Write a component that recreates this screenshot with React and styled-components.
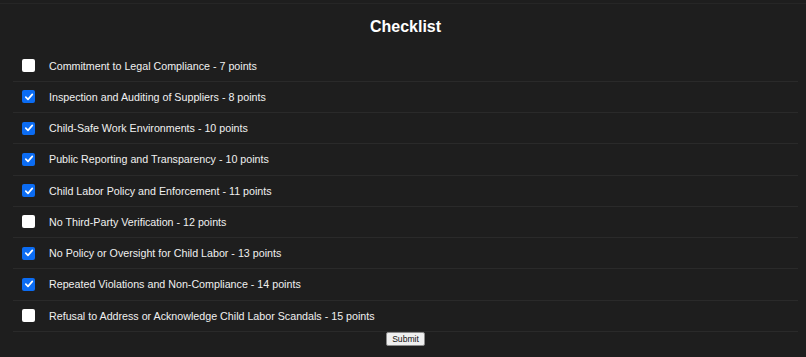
import React, { useState } from "react";
import styled, { createGlobalStyle } from "styled-components";

const GlobalStyle = createGlobalStyle`
    html, body {
        margin: 0;
        padding: 0;
        background: #1e1e1e;
        font-family: "Liberation Sans", Arial, sans-serif;
    }
`;

const Wrapper = styled.div`
    margin-top: 3px;
    border-top: 1px solid #262626;
    padding: 0 8px 0 13px;
    height: 353px;
    box-sizing: border-box;
    background: #1e1e1e;
    color: #ffffff;
`;

const Title = styled.h1`
    margin: 0 0 14.5px;
    padding-top: 14px;
    font-size: 16px;
    line-height: 18px;
    font-weight: bold;
    text-align: center;
    color: #ffffff;
`;

const List = styled.ul`
    list-style: none;
    margin: 0;
    padding: 0;
`;

const Row = styled.li`
    display: flex;
    align-items: center;
    gap: 14px;
    height: 31.25px;
    box-sizing: border-box;
    padding-left: 9px;
    border-bottom: 1px solid #2a2a2a;
    font-size: 10.7px;
    color: #f0f0f0;
    cursor: pointer;
`;

const HiddenInput = styled.input`
    display: none;
`;

const Box = styled.span`
    width: 13px;
    height: 13px;
    flex: none;
    border-radius: 2px;
    display: flex;
    align-items: center;
    justify-content: center;
    background: ${({ checked }) => (checked ? "#0b6cf3" : "#ffffff")};
`;

const Footer = styled.div`
    display: flex;
    justify-content: center;
`;

const SubmitButton = styled.button`
    height: 14px;
    padding: 0 5px;
    margin-top: 0;
    border: 1px solid #8a8a8a;
    border-radius: 2px;
    background: #efefef;
    color: #111111;
    font-family: "Liberation Sans", Arial, sans-serif;
    font-size: 8.6px;
    line-height: 12px;
`;

const items = [
    { label: "Commitment to Legal Compliance", points: 7, checked: false },
    { label: "Inspection and Auditing of Suppliers", points: 8, checked: true },
    { label: "Child-Safe Work Environments", points: 10, checked: true },
    { label: "Public Reporting and Transparency", points: 10, checked: true },
    { label: "Child Labor Policy and Enforcement", points: 11, checked: true },
    { label: "No Third-Party Verification", points: 12, checked: false },
    { label: "No Policy or Oversight for Child Labor", points: 13, checked: true },
    { label: "Repeated Violations and Non-Compliance", points: 14, checked: true },
    { label: "Refusal to Address or Acknowledge Child Labor Scandals", points: 15, checked: false },
];

const Check = () => (
    <svg width="10" height="10" viewBox="0 0 10 10">
        <path d="M1.8 5.2 L4 7.4 L8.3 2.4" fill="none" stroke="#ffffff" strokeWidth="1.7" strokeLinecap="round" strokeLinejoin="round" />
    </svg>
);

const App = () => {
    const [checks, setChecks] = useState(items.map((i) => i.checked));

    const toggle = (idx) => {
        setChecks((prev) => prev.map((c, i) => (i === idx ? !c : c)));
    };

    return (
        <Wrapper>
            <GlobalStyle />
            <Title>Checklist</Title>
            <List>
                {items.map((item, idx) => (
                    <Row key={item.label} onClick={() => toggle(idx)}>
                        <HiddenInput type="checkbox" checked={checks[idx]} readOnly />
                        <Box checked={checks[idx]}>{checks[idx] && <Check />}</Box>
                        <span>
                            {item.label} - {item.points} points
                        </span>
                    </Row>
                ))}
            </List>
            <Footer>
                <SubmitButton>Submit</SubmitButton>
            </Footer>
        </Wrapper>
    );
};

export default App;
